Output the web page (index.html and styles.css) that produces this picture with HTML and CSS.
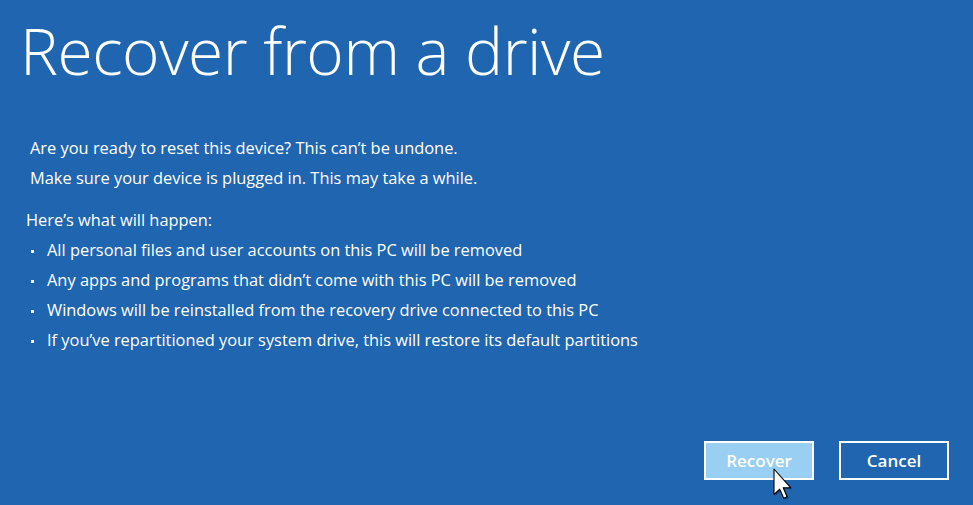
FILE: index.html
```html
<!DOCTYPE html>
<html>
<head>
<meta charset="utf-8">
<link rel="stylesheet" href="styles.css">
</head>
<body>
<main class="screen">
  <h1 class="title">Recover from a drive</h1>
  <section class="intro">
    <p>Are you ready to reset this device? This can’t be undone.</p>
    <p>Make sure your device is plugged in. This may take a while.</p>
  </section>
  <section class="happen">
    <p class="lead">Here’s what will happen:</p>
    <ul class="list">
      <li>All personal files and user accounts on this PC will be removed</li>
      <li>Any apps and programs that didn’t come with this PC will be removed</li>
      <li>Windows will be reinstalled from the recovery drive connected to this PC</li>
      <li>If you’ve repartitioned your system drive, this will restore its default partitions</li>
    </ul>
  </section>
  <div class="actions">
    <button class="btn btn-primary">Recover
      <svg class="cursor" width="22" height="34" viewBox="0 0 22 34"><path d="M2.5 2.5 L2.5 28 L8.2 22.6 L12.2 31.8 L15.6 30.3 L11.7 21.3 L19.3 21.3 Z" fill="rgba(0,0,0,0.35)"/><path d="M1 1 L1 26.5 L6.7 21.1 L10.7 30.3 L14.1 28.8 L10.2 19.8 L17.8 19.8 Z" fill="#fff" stroke="#000" stroke-width="1.1" stroke-linejoin="round"/></svg>
    </button>
    <button class="btn">Cancel</button>
  </div>
</main>
</body>
</html>
```
FILE: styles.css
```css
html, body {
  margin: 0;
  padding: 0;
  width: 973px;
  height: 505px;
  overflow: hidden;
  background: #1f65b0;
}
.screen {
  box-sizing: border-box;
  height: 505px;
  display: flex;
  flex-direction: column;
  color: #fff;
  font-family: "Open Sans", "Noto Sans", sans-serif;
}
.title {
  margin: 6px 0 0 20px;
  font-weight: 300;
  font-size: 64px;
  line-height: 90px;
  letter-spacing: -0.5px;
}
.intro {
  margin: 37px 0 0 30px;
}
p {
  margin: 0;
}
.intro p, .lead, .list li {
  font-size: 16.4px;
  line-height: 30px;
  height: 30px;
}
.happen {
  margin: 12px 0 0 26px;
}
.list {
  list-style: none;
  margin: 0;
  padding: 0 0 0 4px;
}
.list li {
  position: relative;
  padding-left: 17px;
}
.list li::before {
  content: "";
  position: absolute;
  left: 1px;
  top: 15px;
  width: 3px;
  height: 3px;
  background: #fff;
}
.actions {
  margin: auto 24px 25px 0;
  display: flex;
  justify-content: flex-end;
  gap: 25px;
}
.btn {
  position: relative;
  width: 110px;
  height: 39px;
  box-sizing: border-box;
  border: 2px solid #fff;
  background: transparent;
  color: #fff;
  font-family: "Open Sans", "Noto Sans", sans-serif;
  font-weight: 600;
  font-size: 17px;
  padding: 0;
}
.btn-primary {
  background: #99cff2;
}
.cursor {
  position: absolute;
  left: 67px;
  top: 25px;
}
```
